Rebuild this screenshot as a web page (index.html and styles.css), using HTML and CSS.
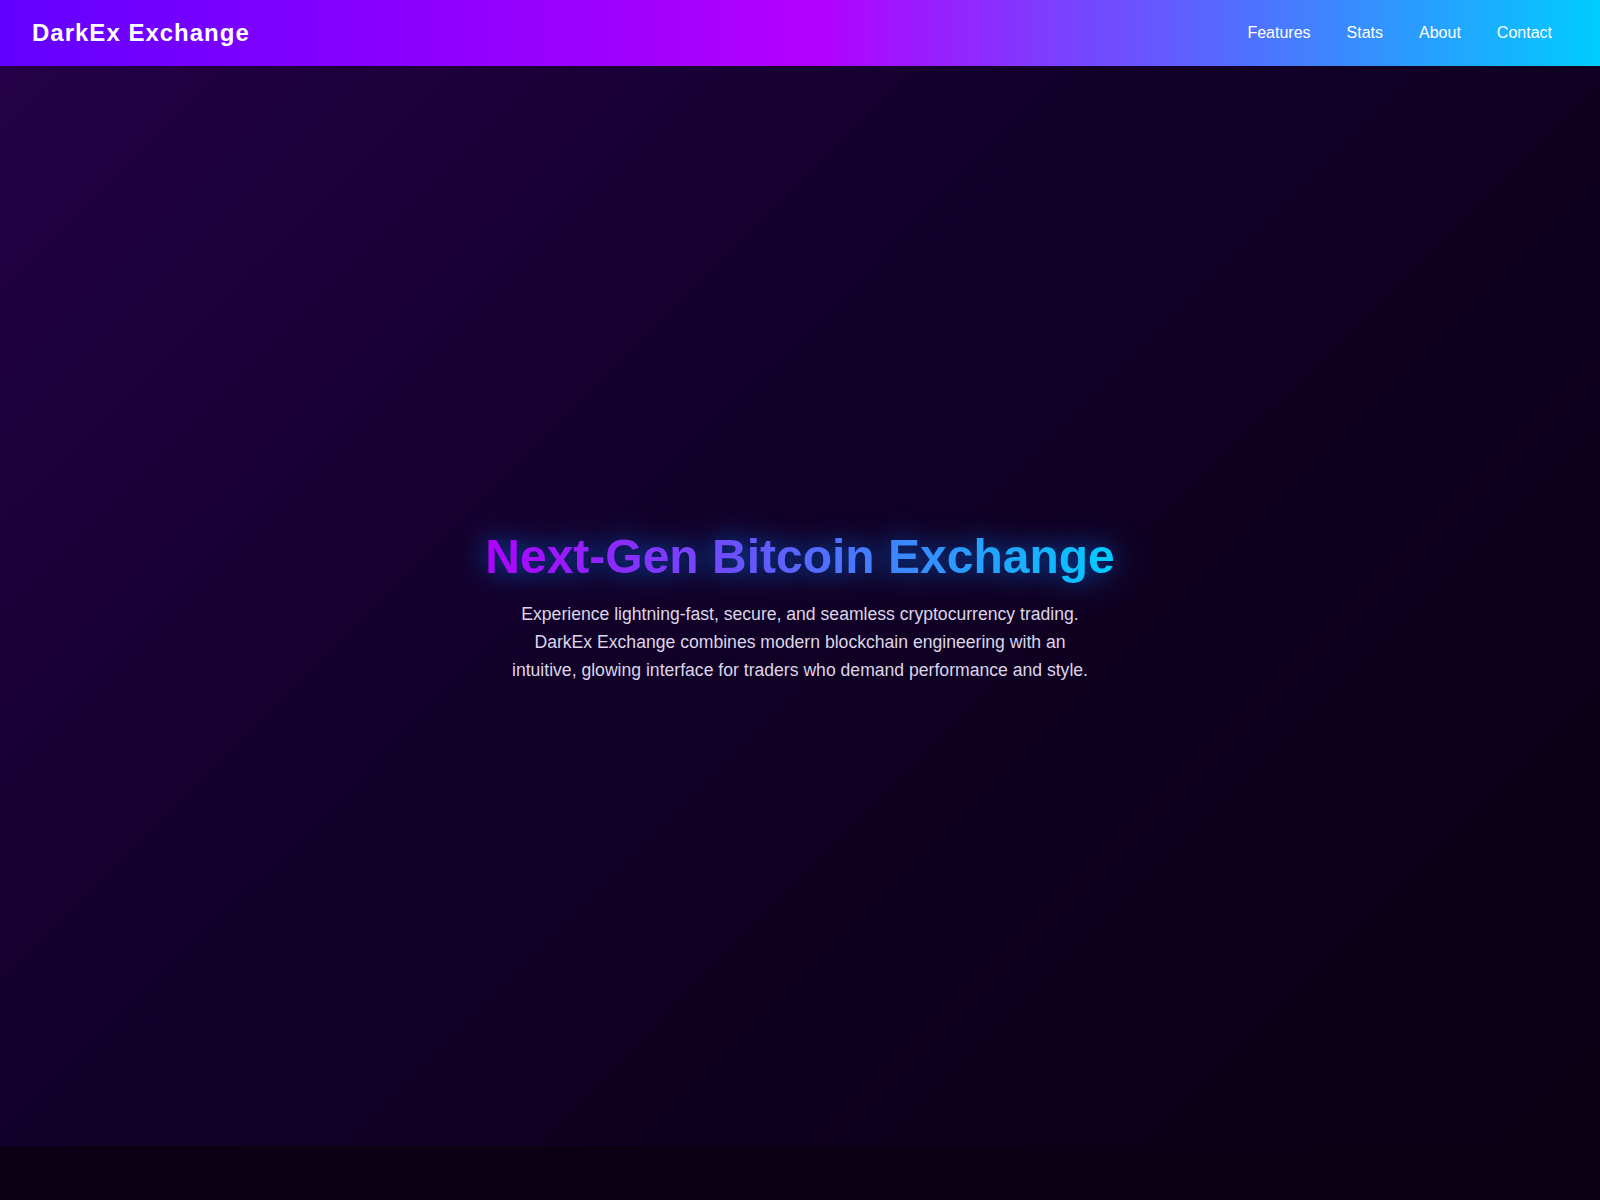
FILE: index.html
```html
<!DOCTYPE html>
<html lang="en">
<head>
<meta charset="UTF-8" />
<meta name="viewport" content="width=device-width, initial-scale=1.0" />
<title>DarkEx Exchange</title>
<link rel="stylesheet" href="styles.css">
</head>
<body>

<!-- Шапка -->
<header class="topbar">
  <div class="logo">DarkEx Exchange</div>
  <nav class="menu">
    <a href="#features">Features</a>
    <a href="#stats">Stats</a>
    <a href="#about">About</a>
    <a href="#contact">Contact</a>
  </nav>
</header>

<!-- Главный блок -->
<section class="hero">
  <h1 class="hero-title">Next-Gen Bitcoin Exchange</h1>
  <p class="hero-text">Experience lightning-fast, secure, and seamless cryptocurrency trading. DarkEx Exchange combines modern blockchain engineering with an intuitive, glowing interface for traders who demand performance and style.</p>
</section>

</body>
</html>
```

FILE: styles.css
```css
/* Общие стили */
* {
  box-sizing: border-box;
}
body {
  margin: 0;
  font-family: "Liberation Sans", Arial, sans-serif;
  background: #0c0014;
  color: #fff;
  min-height: 100vh;
}

/* Шапка */
.topbar {
  height: 66px;
  display: flex;
  align-items: center;
  justify-content: space-between;
  padding: 0 48px 0 32px;
  background: linear-gradient(90deg, #6200ff 0%, #b300ff 51%, #00ccff 100%);
}
.logo {
  font-size: 24px;
  font-weight: bold;
  letter-spacing: 1px;
}
.menu {
  display: flex;
  gap: 36px;
}
.menu a {
  color: #fff;
  text-decoration: none;
  font-size: 16px;
}

/* Главный блок */
.hero {
  height: 1080px;
  display: flex;
  flex-direction: column;
  align-items: center;
  justify-content: center;
  text-align: center;
  background: linear-gradient(135deg, #250048 0%, #12002a 40%, #0a0013 100%);
}
.hero-title {
  margin: 0 0 16px;
  font-size: 48px;
  font-weight: bold;
  background: linear-gradient(90deg, #b000ff, #00ccff);
  -webkit-background-clip: text;
  background-clip: text;
  color: transparent;
  filter: drop-shadow(0 0 14px rgba(0, 120, 255, 0.75));
}
.hero-text {
  margin: 0;
  max-width: 600px;
  font-size: 17.6px;
  line-height: 28px;
  color: #ddd6e8;
}
```
